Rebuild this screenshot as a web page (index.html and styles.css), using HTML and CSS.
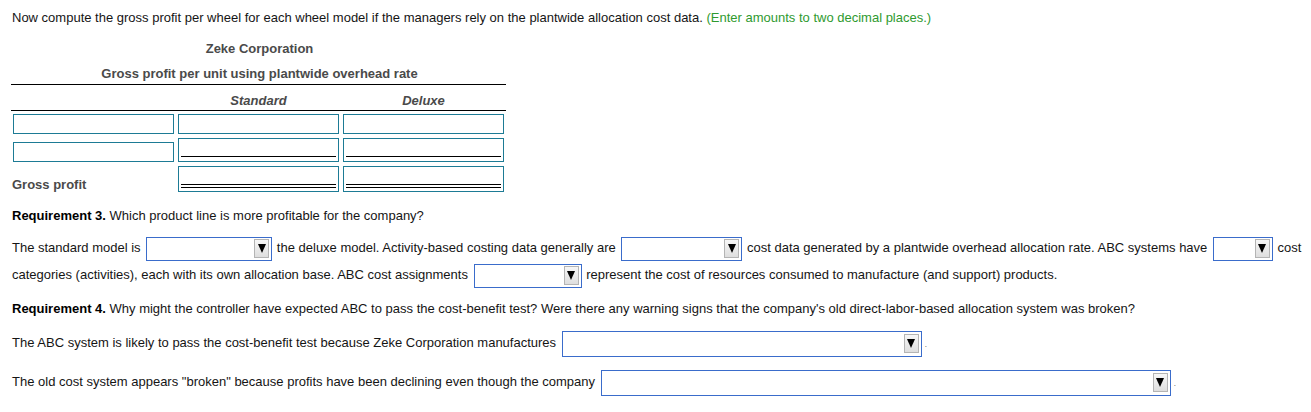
FILE: index.html
```html
<!DOCTYPE html>
<html>
<head>
<meta charset="utf-8">
<link rel="stylesheet" href="styles.css">
</head>
<body>
<div class="page">
  <p class="intro">Now compute the gross profit per wheel for each wheel model if the managers rely on the plantwide allocation cost data. <span class="hint">(Enter amounts to two decimal places.)</span></p>

  <div class="sheet">
    <div class="t-title">Zeke Corporation</div>
    <div class="t-sub">Gross profit per unit using plantwide overhead rate</div>
    <div class="t-head">
      <div class="hcell"></div>
      <div class="hcell">Standard</div>
      <div class="hcell">Deluxe</div>
    </div>
    <div class="t-row r1">
      <div class="cell"><div class="box h20"></div></div>
      <div class="cell"><div class="box h20"></div></div>
      <div class="cell"><div class="box h20"></div></div>
    </div>
    <div class="t-row r2">
      <div class="cell"><div class="box h20"></div></div>
      <div class="cell"><div class="box h24 single"></div></div>
      <div class="cell"><div class="box h24 single"></div></div>
    </div>
    <div class="t-row r3">
      <div class="cell label">Gross profit</div>
      <div class="cell"><div class="box h26 double"></div></div>
      <div class="cell"><div class="box h26 double"></div></div>
    </div>
  </div>

  <p class="req"><b>Requirement 3.</b> Which product line is more profitable for the company?</p>

  <p class="fill">The standard model is <span class="sel w126"><span class="arrow"></span></span> the deluxe model. Activity-based costing data generally are <span class="sel w121"><span class="arrow"></span></span> cost data generated by a plantwide overhead allocation rate. ABC systems have <span class="sel w60"><span class="arrow"></span></span> cost<br>categories (activities), each with its own allocation base. ABC cost assignments <span class="sel w108"><span class="arrow"></span></span> represent the cost of resources consumed to manufacture (and support) products.</p>

  <p class="req req4"><b>Requirement 4.</b> Why might the controller have expected ABC to pass the cost-benefit test? Were there any warning signs that the company's old direct-labor-based allocation system was broken?</p>

  <p class="line l1">The ABC system is likely to pass the cost-benefit test because Zeke Corporation manufactures <span class="sel tall w360"><span class="arrow"></span></span><span class="dot">.</span></p>

  <p class="line l2">The old cost system appears "broken" because profits have been declining even though the company <span class="sel tall w570"><span class="arrow"></span></span><span class="dot">.</span></p>
</div>
</body>
</html>
```

FILE: styles.css
```css
html, body {
  margin: 0;
  padding: 0;
  background: #fff;
}

body {
  font-family: "Liberation Sans", Arial, sans-serif;
  font-size: 13px;
  color: #151515;
}

.page {
  padding: 10px 12px 0 12px;
}

p {
  margin: 0;
}

.intro {
  line-height: 16px;
}

.hint {
  color: #2f9a2f;
}

/* worksheet */
.sheet {
  width: 495px;
  margin-left: -1px;
  margin-top: 11px;
  color: #4a4a4a;
}

.t-title,
.t-sub {
  font-weight: bold;
  text-align: center;
  padding-left: 2px;
}

.t-title {
  line-height: 23px;
}

.t-sub {
  line-height: 21px;
  padding-top: 3px;
  border-bottom: 1px solid #000;
}

.t-head {
  display: grid;
  grid-template-columns: 165px 165px 165px;
  border-bottom: 1px solid #000;
  padding: 8px 0 1px 0;
}

.hcell {
  font-weight: bold;
  font-style: italic;
  text-align: center;
  line-height: 16px;
}

.t-row {
  display: grid;
  grid-template-columns: 165px 165px 165px;
  align-items: end;
}

.r1 {
  padding-top: 3px;
}

.r2,
.r3 {
  padding-top: 4px;
}

.cell {
  padding-left: 2px;
}

.label {
  font-weight: bold;
  line-height: 16px;
  padding-left: 1px;
  margin-bottom: -1px;
}

.box {
  box-sizing: border-box;
  width: 161px;
  border: 1px solid #1d7b95;
  background: #fff;
  padding: 0 2px;
  display: flex;
  flex-direction: column;
  justify-content: flex-end;
}

.h20 { height: 20px; }
.h24 { height: 24px; padding-bottom: 4px; }
.h26 { height: 26px; padding-bottom: 3px; }

.single::after {
  content: "";
  display: block;
  border-top: 1px solid #000;
}

.double::after {
  content: "";
  display: block;
  height: 2px;
  border-top: 1px solid #000;
  border-bottom: 1px solid #000;
}

/* questions */
.req {
  line-height: 16px;
  margin-top: 16px;
}

.req b {
  color: #000;
}

.fill {
  margin-top: 10px;
  line-height: 27px;
  white-space: nowrap;
}

.sel {
  box-sizing: border-box;
  display: inline-flex;
  justify-content: flex-end;
  align-items: center;
  height: 24px;
  vertical-align: middle;
  border: 1px solid #3a6ccb;
  background: #fff;
  padding: 0 2px;
  margin: 0 1px 0 2px;
}

.sel.tall {
  height: 26px;
}

.arrow {
  box-sizing: border-box;
  width: 15px;
  height: 19px;
  border: 1px solid #b4b4b4;
  background: linear-gradient(#f7f7f7, #dedede);
  display: flex;
  align-items: center;
  justify-content: center;
}

.arrow::after {
  content: "";
  width: 0;
  height: 0;
  border-left: 4px solid transparent;
  border-right: 4px solid transparent;
  border-top: 9px solid #000;
}

.w126 { width: 126px; }
.w121 { width: 121px; }
.w60 { width: 60px; }
.w108 { width: 108px; }
.w360 { width: 360px; }
.w570 { width: 570px; }

.req4 {
  margin-top: 13px;
}

.line {
  line-height: 26px;
  white-space: nowrap;
}

.l1 {
  margin-top: 13px;
}

.l2 {
  margin-top: 11px;
}

.dot {
  font-size: 8px;
  color: #444;
  margin-left: 2px;
}
```
